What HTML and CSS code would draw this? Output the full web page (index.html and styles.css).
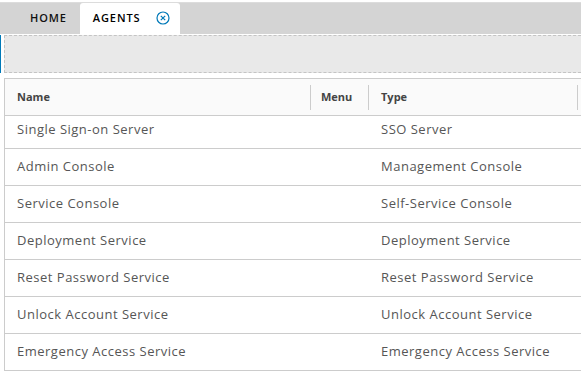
FILE: index.html
```html
<!DOCTYPE html>
<html lang="en">
<head>
    <meta charset="UTF-8">
    <meta name="viewport" content="width=device-width, initial-scale=1.0">
    <title>Agents</title>
    <link rel="stylesheet" href="styles.css">
</head>
<body>
    <div id="page">
        <div class="tab-bar">
            <div class="tab">HOME</div>
            <div class="tab active">
                AGENTS
                <svg class="close-icon" width="14" height="14" viewBox="0 0 14 14">
                    <circle cx="7" cy="7" r="6" fill="none" stroke="#0079b8" stroke-width="1.2"/>
                    <path d="M4.8 4.8 L9.2 9.2 M9.2 4.8 L4.8 9.2" stroke="#0079b8" stroke-width="1.2"/>
                </svg>
            </div>
        </div>
        <div class="drop-row">
            <div class="drop-zone"></div>
        </div>
        <div class="grid">
            <div class="grid-header">
                <div class="col col-name">Name</div>
                <div class="col col-menu">Menu</div>
                <div class="col col-type">Type</div>
            </div>
            <div class="grid-body">
                <div class="grid-rows">
                    <div class="row"><div class="cell col-name">Single Sign-on Server</div><div class="cell col-menu"></div><div class="cell col-type">SSO Server</div></div>
                    <div class="row"><div class="cell col-name">Admin Console</div><div class="cell col-menu"></div><div class="cell col-type">Management Console</div></div>
                    <div class="row"><div class="cell col-name">Service Console</div><div class="cell col-menu"></div><div class="cell col-type">Self-Service Console</div></div>
                    <div class="row"><div class="cell col-name">Deployment Service</div><div class="cell col-menu"></div><div class="cell col-type">Deployment Service</div></div>
                    <div class="row"><div class="cell col-name">Reset Password Service</div><div class="cell col-menu"></div><div class="cell col-type">Reset Password Service</div></div>
                    <div class="row"><div class="cell col-name">Unlock Account Service</div><div class="cell col-menu"></div><div class="cell col-type">Unlock Account Service</div></div>
                    <div class="row"><div class="cell col-name">Emergency Access Service</div><div class="cell col-menu"></div><div class="cell col-type">Emergency Access Service</div></div>
                </div>
            </div>
        </div>
    </div>
</body>
</html>
```

FILE: styles.css
```css
body {
    margin: 0;
    padding: 0;
    background-color: #ffffff;
    font-family: "Open Sans", Lato, sans-serif;
    color: #565656;
    overflow: hidden;
}
#page {
    width: 581px;
    height: 371px;
    overflow: hidden;
}
.tab-bar {
    display: flex;
    align-items: flex-end;
    height: 32px;
    margin-top: 2px;
    background-color: #d4d4d4;
    border-top: 1px solid #dcdcdc;
    box-sizing: border-box;
    padding-left: 11px;
}
.tab {
    display: flex;
    align-items: center;
    height: 31px;
    padding: 0 13px 3px 19px;
    font-size: 11px;
    font-weight: 600;
    letter-spacing: 0.9px;
    color: #111111;
    box-sizing: border-box;
}
.tab.active {
    background-color: #ffffff;
    border-radius: 3px 3px 0 0;
    padding: 0 10px 3px 13px;
    width: 100px;
    color: #000000;
}
.close-icon {
    margin-left: auto;
    margin-top: 1px;
}
.drop-row {
    border-left: 1px solid #0079b8;
    padding-left: 3px;
    margin-top: 1px;
    height: 38px;
}
.drop-zone {
    height: 38px;
    margin-right: -10px;
    background-color: #e9e9e9;
    border: 1px dashed #c4c4c4;
    box-sizing: border-box;
}
.grid {
    margin-top: 5px;
    margin-left: 4px;
    margin-right: -10px;
    border-left: 1px solid #cccccc;
    border-top: 1px solid #cccccc;
}
.grid-header {
    display: flex;
    height: 36px;
    align-items: center;
    background-color: #fafafa;
    border-bottom: 1px solid #cccccc;
    font-size: 11px;
    font-weight: 700;
    color: #444444;
}
.grid-header .col {
    height: 25px;
    display: flex;
    align-items: center;
    border-right: 1px solid #cccccc;
    box-sizing: border-box;
    padding-bottom: 1px;
}
.col-name {
    width: 306px;
    padding-left: 12px;
    box-sizing: border-box;
}
.col-menu {
    width: 58px;
    padding-left: 10px;
    box-sizing: border-box;
}
.col-type {
    width: 209px;
    padding-left: 12px;
    box-sizing: border-box;
}
.grid-body {
    height: 260px;
    overflow: hidden;
}
.grid-rows {
    margin-top: -4px;
}
.row {
    display: flex;
    align-items: center;
    height: 37px;
    padding-bottom: 2px;
    border-bottom: 1px solid #cccccc;
    box-sizing: border-box;
    font-size: 13px;
    letter-spacing: 0.5px;
    color: #565656;
}
.cell {
    white-space: nowrap;
}
```
